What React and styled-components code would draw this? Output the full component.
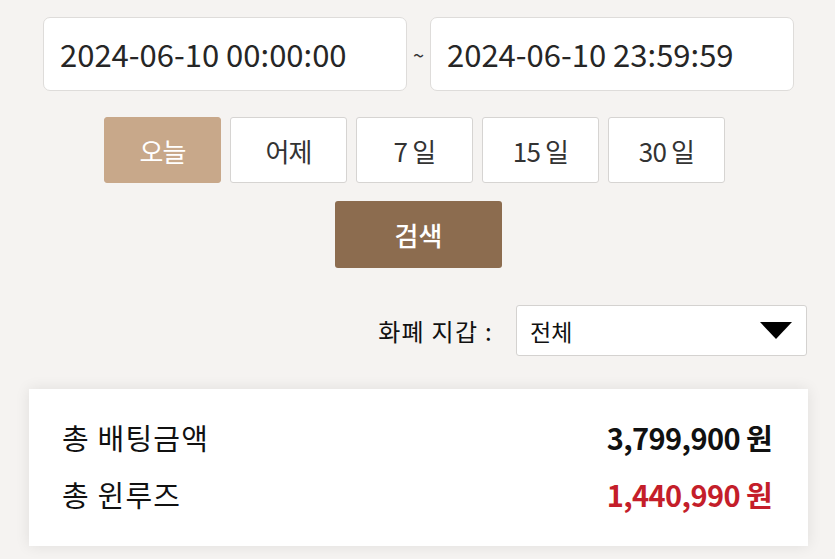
import React, { useState } from 'react';
import styled, { createGlobalStyle } from 'styled-components';

const GlobalStyle = createGlobalStyle`
  html, body {
    margin: 0;
    padding: 0;
    background: #f5f3f1;
    font-family: "Noto Sans CJK KR", "Noto Sans", sans-serif;
  }
  * {
    box-sizing: border-box;
  }
`;

const Page = styled.div`
  display: flex;
  flex-direction: column;
  padding: 17px 27px 13px 29px;
`;

const DateRow = styled.div`
  display: flex;
  align-items: center;
  padding-left: 14px;
`;

const DateInput = styled.div`
  width: 364px;
  height: 74px;
  background: #fff;
  border: 1px solid #dedcda;
  border-radius: 7px;
  display: flex;
  align-items: center;
  padding-left: 16px;
  padding-bottom: 2px;
  font-size: 31px;
  color: #262626;
  letter-spacing: 0;
`;

const Tilde = styled.span`
  width: 23px;
  text-align: center;
  font-size: 20px;
  color: #333;
`;

const QuickRow = styled.div`
  display: flex;
  justify-content: flex-start;
  gap: 9px;
  margin-top: 26px;
  padding-left: 75px;
`;

const QuickButton = styled.button`
  width: 117px;
  height: 66px;
  border-radius: 3px;
  border: 1px solid ${({ $active }) => ($active ? '#c8a88a' : '#d6d4d2')};
  background: ${({ $active }) => ($active ? '#c8a88a' : '#fff')};
  color: ${({ $active }) => ($active ? '#fff' : '#333')};
  font-family: inherit;
  font-size: 26px;
  letter-spacing: -0.8px;
  cursor: pointer;
  padding: 0;
`;

const SearchButton = styled.button`
  align-self: flex-start;
  margin-top: 18px;
  margin-left: 306px;
  width: 167px;
  height: 67px;
  border: none;
  border-radius: 3px;
  background: #8c6c4f;
  color: #fff;
  font-family: inherit;
  font-size: 26px;
  font-weight: 500;
  cursor: pointer;
`;

const FilterRow = styled.div`
  display: flex;
  justify-content: flex-end;
  align-items: center;
  gap: 23px;
  margin-top: 37px;
  padding-right: 1px;
`;

const FilterLabel = styled.span`
  font-size: 24px;
  letter-spacing: 1.3px;
  color: #111;
`;

const Select = styled.div`
  width: 291px;
  height: 51px;
  background: #fff;
  border: 1px solid #d4d2d0;
  border-radius: 3px;
  display: flex;
  align-items: center;
  justify-content: space-between;
  padding: 0 14px 0 13px;
  font-size: 23px;
  color: #111;
`;

const Caret = styled.span`
  width: 0;
  height: 0;
  border-left: 16px solid transparent;
  border-right: 16px solid transparent;
  border-top: 17px solid #000;
`;

const SummaryCard = styled.div`
  margin-top: 33px;
  width: 779px;
  height: 157px;
  background: #fff;
  box-shadow: 0 0 14px rgba(0, 0, 0, 0.09);
  display: flex;
  flex-direction: column;
  justify-content: center;
  gap: 19px;
  padding: 0 36px 4px 33px;
`;

const SummaryRow = styled.div`
  display: flex;
  justify-content: space-between;
  align-items: center;
  height: 38px;
`;

const SummaryLabel = styled.span`
  font-size: 29px;
  letter-spacing: 1.2px;
  color: #111;
`;

const SummaryValue = styled.span`
  font-size: 29px;
  font-weight: 700;
  letter-spacing: -0.6px;
  color: ${({ $red }) => ($red ? '#c41e2a' : '#111')};
`;

const periods = ['오늘', '어제', '7 일', '15 일', '30 일'];

export default function App() {
  const [active, setActive] = useState(0);

  return (
    <>
      <GlobalStyle />
      <Page>
        <DateRow>
          <DateInput>2024-06-10 00:00:00</DateInput>
          <Tilde>~</Tilde>
          <DateInput>2024-06-10 23:59:59</DateInput>
        </DateRow>
        <QuickRow>
          {periods.map((p, i) => (
            <QuickButton key={p} $active={active === i} onClick={() => setActive(i)}>
              {p}
            </QuickButton>
          ))}
        </QuickRow>
        <SearchButton>검색</SearchButton>
        <FilterRow>
          <FilterLabel>화폐 지갑 :</FilterLabel>
          <Select>
            <span>전체</span>
            <Caret />
          </Select>
        </FilterRow>
        <SummaryCard>
          <SummaryRow>
            <SummaryLabel>총 배팅금액</SummaryLabel>
            <SummaryValue>3,799,900 원</SummaryValue>
          </SummaryRow>
          <SummaryRow>
            <SummaryLabel>총 윈루즈</SummaryLabel>
            <SummaryValue $red>1,440,990 원</SummaryValue>
          </SummaryRow>
        </SummaryCard>
      </Page>
    </>
  );
}
